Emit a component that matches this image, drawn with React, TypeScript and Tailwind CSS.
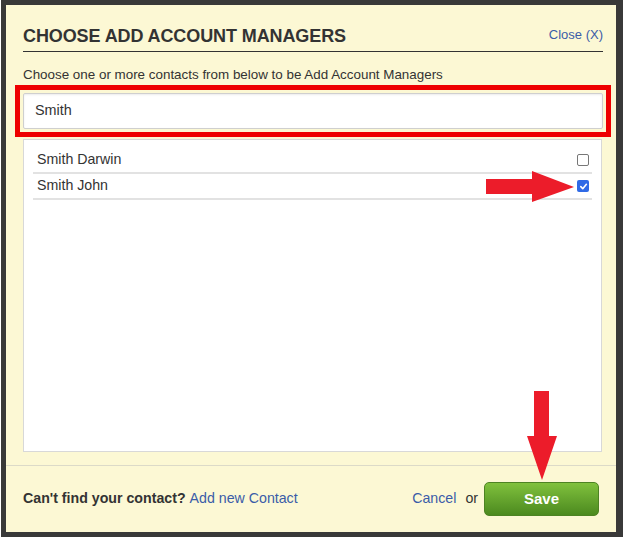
import React from "react";

const contacts = [
  { name: "Smith Darwin", checked: false },
  { name: "Smith John", checked: true },
];

function Box({ checked }: { checked: boolean }) {
  if (checked) {
    return (
      <span className="flex h-[12px] w-[12px] items-center justify-center rounded-[2px] bg-[#2f6ae6]">
        <svg width="9" height="9" viewBox="0 0 10 10">
          <path d="M2 5.2 L4.2 7.4 L8.2 2.6" fill="none" stroke="#fff" strokeWidth="1.8" strokeLinecap="round" strokeLinejoin="round" />
        </svg>
      </span>
    );
  }
  return <span className="block h-[12px] w-[12px] rounded-[2px] border border-[#777] bg-white" />;
}

export default function App() {
  return (
    <div className="relative h-[539px] w-[624px] bg-white font-['Liberation_Sans',Arial,sans-serif] text-[#333]">
      {/* Dialog frame */}
      <div className="ml-[1px] flex h-[537px] w-[622px] flex-col border-[5px] border-r-[7px] border-[#393939] bg-[#fcf8d4]">
        <div className="flex flex-1 flex-col pl-[17px] pr-[13px] pt-[21px]">
          {/* Header */}
          <div className="flex items-start justify-between border-b border-[#333] pb-[4px]">
            <h1 className="text-[18px] font-bold leading-[21px] tracking-[-0.1px]">CHOOSE ADD ACCOUNT MANAGERS</h1>
            <a className="mt-[1px] text-[13px] leading-[15px] text-[#3a5ca8]">Close (X)</a>
          </div>

          <p className="mt-[15px] text-[13.4px] leading-[15px]">
            Choose one or more contacts from below to be Add Account Managers
          </p>

          {/* Search, highlighted */}
          <div className="mx-[-8px] mt-[3px] border-[5px] border-[#ee0000] p-[3px]">
            <div className="flex h-[36px] items-center rounded-[2px] border border-[#cfcfcf] bg-white pl-[11px] text-[14.4px] shadow-[inset_0_1px_2px_rgba(0,0,0,0.08)]">
              Smith
            </div>
          </div>

          {/* Results */}
          <div className="mr-[1px] mt-[2px] h-[313px] border border-[#d8d8d8] bg-white px-[9px] pt-[8px]">
            {contacts.map((c) => (
              <div
                key={c.name}
                className="flex h-[26px] items-center justify-between border-b-2 border-[#e2e2e2] pl-[4px] pr-[3px] text-[14.2px]"
              >
                <span>{c.name}</span>
                <Box checked={c.checked} />
              </div>
            ))}
          </div>
        </div>

        {/* Footer */}
        <div className="mt-[13px] flex h-[67px] items-center border-t border-[#dcdac8] pl-[17px] pr-[17px] text-[14.2px]">
          <span className="font-bold">Can't find your contact?</span>
          <a className="ml-[4px] text-[#3a5ca8]">Add new Contact</a>
          <a className="ml-auto text-[#3a5ca8]">Cancel</a>
          <span className="ml-[9px]">or</span>
          <button className="ml-[6px] flex h-[34px] w-[115px] items-center justify-center rounded-[5px] border border-[#4d8323] bg-gradient-to-b from-[#80c13d] to-[#4c8a1f] text-[15px] font-bold text-white">
            Save
          </button>
        </div>
      </div>

      {/* Annotation arrows */}
      <svg className="absolute left-[486px] top-[171px]" width="90" height="32" viewBox="0 0 90 32">
        <polygon points="0,8 46,8 46,0 88,16 46,31 46,23 0,23" fill="#ec1c2a" />
      </svg>
      <svg className="absolute left-[526px] top-[391px]" width="32" height="90" viewBox="0 0 32 90">
        <polygon points="8,0 23,0 23,45 31,45 16,89 1,45 8,45" fill="#ec1c2a" />
      </svg>
    </div>
  );
}
